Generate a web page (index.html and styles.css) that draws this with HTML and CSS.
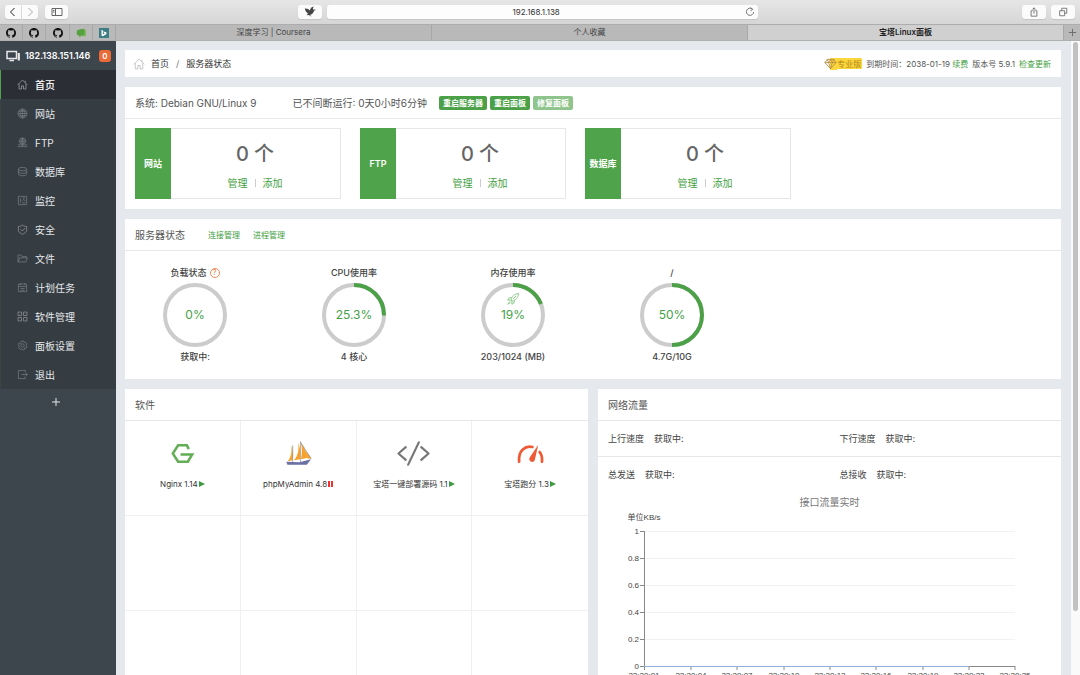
FILE: index.html
```html
<!DOCTYPE html>
<html lang="zh-CN">
<head>
<meta charset="utf-8">
<meta name="viewport" content="width=device-width, initial-scale=1">
<title>宝塔Linux面板</title>
<link rel="stylesheet" href="styles.css">
</head>
<body>
<svg class="defs" aria-hidden="true">
  <symbol id="github" viewBox="0 0 16 16"><path fill="currentColor" d="M8 0C3.58 0 0 3.58 0 8c0 3.54 2.29 6.53 5.47 7.59.4.07.55-.17.55-.38v-1.49c-2.01.37-2.53-.49-2.69-.94-.09-.23-.48-.94-.82-1.13-.28-.15-.68-.52-.01-.53.63-.01 1.08.58 1.23.82.72 1.21 1.87.87 2.33.66.07-.52.28-.87.51-1.07-1.78-.2-3.64-.89-3.64-3.95 0-.87.31-1.59.82-2.15-.08-.2-.36-1.02.08-2.12 0 0 .67-.21 2.2.82a7.6 7.6 0 0 1 4 0c1.53-1.04 2.2-.82 2.2-.82.44 1.1.16 1.92.08 2.12.51.56.82 1.27.82 2.15 0 3.07-1.87 3.75-3.65 3.95.29.25.54.73.54 1.48v2.15c0 .21.15.46.55.38A8 8 0 0 0 16 8c0-4.42-3.58-8-8-8z"/></symbol>
  <symbol id="home" viewBox="0 0 16 16"><path d="M1 8.5 8 1.500l7 7M3 7v7.500h3.500V10h3v4.500H13V7M12 5V2.500"/></symbol>
</svg>

<header class="toolbar">
  <div class="nav-buttons">
    <button class="tool-btn back" aria-label="后退"><svg viewBox="0 0 10 10"><path d="M6.500 1 2.500 5l4 4"/></svg></button>
    <button class="tool-btn forward" aria-label="前进"><svg viewBox="0 0 10 10"><path d="M3.500 1l4 4-4 4"/></svg></button>
  </div>
  <button class="tool-btn side-btn" aria-label="边栏"><svg viewBox="0 0 12 10"><path d="M1 1.500h10v7H1zM4.500 1.500v7M2 3.500h1.500M2 5h1.500"/></svg></button>
  <div class="address-group">
    <button class="tool-btn bird-btn" aria-label="扩展"><svg viewBox="0 0 12 12"><path class="solid" d="M.8 2.600C3 2.400 4.800 3.200 6 4.600 6.300 2.500 7.500 1 9.800.6 9 1.800 8.800 2.800 9 3.800c.9-.5 1.800-.4 2.700.1-1.200.2-1.700.8-2 1.700C9.200 7.600 7.800 8.700 6 8.700L7.500 10.800 4.800 9 2.600 9.200 4 7.600C2.400 6.600 1.200 4.900.8 2.600z"/></svg></button>
    <div class="address">
      <input class="address-input" type="text" value="192.168.1.138" aria-label="地址">
      <button class="reload" aria-label="重新载入"><svg viewBox="0 0 10 10"><path d="M7.500 2.200A3.600 3.600 0 1 0 8.600 5M5.500.6l2.200 1.700-2.200 1.500"/></svg></button>
    </div>
  </div>
  <div class="tool-right">
    <button class="tool-btn" aria-label="共享"><svg viewBox="0 0 10 12"><path d="M3.500 4.500h-2V11h7V4.500h-2M5 8V1M3 3l2-2 2 2"/></svg></button>
    <button class="tool-btn" aria-label="标签页概览"><svg viewBox="0 0 12 12"><path d="M2 4.500h6v6H2zM4.500 4.500v-3h6v6H8"/></svg></button>
  </div>
</header>

<nav class="tabs" aria-label="标签页">
  <div class="pins">
    <button class="pin" aria-label="GitHub"><svg><use href="#github"/></svg></button>
    <button class="pin" aria-label="GitHub"><svg><use href="#github"/></svg></button>
    <button class="pin" aria-label="GitHub"><svg><use href="#github"/></svg></button>
    <button class="pin" aria-label="收藏"><svg viewBox="0 0 12 12"><path fill="#79b85c" d="M4 3l8-1v8H4z"/><path fill="#55a13f" d="M1 3l4-1.500L10 1v7L6 9l-2 2.500V9L1 8.500z"/></svg></button>
    <button class="pin" aria-label="Bing"><svg viewBox="0 0 12 12"><path fill="#3d7d85" d="M0 0h12v12H0z"/><path fill="#fff" d="M3 2l1.700.6v5L7 6.500l-1.100-.6L5.200 4 9 5.300v2L4.700 10 3 9z"/></svg></button>
  </div>
  <a class="tab" href="#">深度学习 | Coursera</a>
  <a class="tab" href="#">个人收藏</a>
  <a class="tab tab-active" href="#" aria-current="page">宝塔Linux面板</a>
  <button class="tab-add" aria-label="新标签页"><svg viewBox="0 0 10 10"><path d="M5 1v8M1 5h8"/></svg></button>
</nav>

<div class="app">
  <aside class="sidebar">
    <div class="server">
      <svg class="server-icon" viewBox="0 0 15 12"><path d="M1 1.500h9.500v7H1zM3.500 10.500H8"/><path d="M12.800 3v7.500" stroke-width="2.200"/></svg>
      <span class="server-ip">182.138.151.146</span>
      <span class="badge">0</span>
    </div>
    <nav class="menu">
      <a class="menu-item menu-active" href="#"><svg><use href="#home"/></svg>首页</a>
      <a class="menu-item" href="#"><svg viewBox="0 0 16 16"><circle cx="8" cy="8" r="6.500"/><path d="M1.500 8h13M8 1.500v13M8 1.500c-4.500 3.500-4.500 9.500 0 13M8 1.500c4.500 3.500 4.500 9.500 0 13M2.500 4.700h11M2.500 11.300h11"/></svg>网站</a>
      <a class="menu-item" href="#"><svg viewBox="0 0 16 16"><circle cx="8" cy="6" r="4.700"/><path d="M3.300 6h9.400M8 1.300v9.400M8 1.300c-3 2.500-3 7 0 9.400M8 1.300c3 2.500 3 7 0 9.400M8 11v3M1 11.500h14M1 14h14"/></svg>FTP</a>
      <a class="menu-item" href="#"><svg viewBox="0 0 16 16"><ellipse cx="8" cy="4.500" rx="6" ry="2.500"/><path d="M2 4.500v7c0 3.500 12 3.500 12 0v-7M2 8c0 3.500 12 3.500 12 0"/></svg>数据库</a>
      <a class="menu-item" href="#"><svg viewBox="0 0 16 16"><path d="M2 2h12v12H2zM5 5v6M8 4.500h3.500M8 8l2-1.500L12 9M7.500 11.500H12"/></svg>监控</a>
      <a class="menu-item" href="#"><svg class="strong" viewBox="0 0 16 16"><path d="M2 3.500c3 0 4-.5 6-2 2 1.500 3 2 6 2V9c0 3-3 4.500-6 6-3-1.500-6-3-6-6zM5 7.500l2.500 2.500L12 6"/></svg>安全</a>
      <a class="menu-item" href="#"><svg viewBox="0 0 16 16"><path d="M1.500 13V3H6l1.500 2h6v2M1.500 13 4 7h11l-2 6z"/></svg>文件</a>
      <a class="menu-item" href="#"><svg viewBox="0 0 16 16"><path d="M2 3h12v11H2zM2 6.500h12M5 1.500V4M11 1.500V4M5 9.500h6M5 12h6"/></svg>计划任务</a>
      <a class="menu-item" href="#"><svg class="strong" viewBox="0 0 16 16"><path d="M1.500 1.500h5v5h-5zM9.500 1.500h5v5h-5zM1.500 9.500h5v5h-5zM9.500 9.500h5v5h-5z"/></svg>软件管理</a>
      <a class="menu-item" href="#"><svg viewBox="0 0 16 16"><circle cx="8" cy="8" r="2.500"/><path d="M6.500 1.500h3l.6 2 2-.5 2 2.500-1 1.800 1.400 1.600-1 2.500-2.200.2-.7 2.400-2.600.5L6.500 13l-2.300.5L2.400 11l1-2-1.900-1.600 1-2.600 2.300.2z"/></svg>面板设置</a>
      <a class="menu-item" href="#"><svg viewBox="0 0 16 16"><path d="M12 5V2H2v12h10v-3M6.500 8H15M12.500 5.500 15 8l-2.500 2.500"/></svg>退出</a>
    </nav>
    <button class="menu-add" aria-label="添加菜单"><svg viewBox="0 0 10 10"><path d="M5 1v8M1 5h8"/></svg></button>
  </aside>

  <main class="content">
    <section class="panel crumbs">
      <svg class="crumb-home"><use href="#home"/></svg>
      <a href="#">首页</a><span class="slash">/</span><span>服务器状态</span>
      <div class="license">
        <span class="pro"><svg viewBox="0 0 14 12"><path d="M3.500 1h7L13 4.500 7 11 1 4.500zM1 4.500h12M3.500 1 5 4.500 7 1l2 3.500L10.500 1M5 4.500 7 11l2-6.500"/></svg>专业版</span>
        <span>到期时间：2038-01-19 <a class="green" href="#">续费</a></span>
        <span>版本号 5.9.1</span>
        <a class="green" href="#">检查更新</a>
      </div>
    </section>

    <section class="panel">
      <div class="panel-head">
        <span class="os">系统: Debian GNU/Linux 9</span>
        <span class="uptime">已不间断运行: 0天0小时6分钟</span>
        <div class="actions">
          <button class="action">重启服务器</button>
          <button class="action">重启面板</button>
          <button class="action action-soft">修复面板</button>
        </div>
      </div>
      <div class="tiles">
        <article class="tile"><h3 class="tile-name">网站</h3><div class="tile-body"><p class="tile-count">0 个</p><p class="tile-links"><a href="#">管理</a><i></i><a href="#">添加</a></p></div></article>
        <article class="tile"><h3 class="tile-name">FTP</h3><div class="tile-body"><p class="tile-count">0 个</p><p class="tile-links"><a href="#">管理</a><i></i><a href="#">添加</a></p></div></article>
        <article class="tile"><h3 class="tile-name">数据库</h3><div class="tile-body"><p class="tile-count">0 个</p><p class="tile-links"><a href="#">管理</a><i></i><a href="#">添加</a></p></div></article>
      </div>
    </section>

    <section class="panel">
      <div class="panel-head">
        <h2>服务器状态</h2>
        <div class="head-links"><a class="green" href="#">连接管理</a><a class="green" href="#">进程管理</a></div>
      </div>
      <div class="gauges">
        <div class="gauge">
          <h3>负载状态<button class="help" aria-label="说明">?</button></h3>
          <div class="ring"><svg viewBox="0 0 64 64"><circle class="track" cx="32" cy="32" r="30"/></svg><span>0%</span></div>
          <p>获取中:</p>
        </div>
        <div class="gauge">
          <h3>CPU使用率</h3>
          <div class="ring"><svg viewBox="0 0 64 64"><circle class="track" cx="32" cy="32" r="30"/><circle class="value" cx="32" cy="32" r="30" pathLength="100" stroke-dasharray="25.3 100"/></svg><span>25.3%</span></div>
          <p>4 核心</p>
        </div>
        <div class="gauge">
          <h3>内存使用率</h3>
          <div class="ring"><svg viewBox="0 0 64 64"><circle class="track" cx="32" cy="32" r="30"/><circle class="value" cx="32" cy="32" r="30" pathLength="100" stroke-dasharray="19 100"/></svg>
            <svg class="rocket" viewBox="0 0 12 12"><path d="M4 7C4.500 3.500 7.500 1 11.500.5 11.300 4.500 8.500 7.500 5 8zM4.500 4.500 2 5 .8 7.200 4 7M7.500 7.500 7 10l-2.200 1.200L5 8M2.800 8.500.8 11.200 3.500 9.500M6 6l3-3"/></svg>
            <span>19%</span></div>
          <p>203/1024 (MB)</p>
        </div>
        <div class="gauge">
          <h3>/</h3>
          <div class="ring"><svg viewBox="0 0 64 64"><circle class="track" cx="32" cy="32" r="30"/><circle class="value" cx="32" cy="32" r="30" pathLength="100" stroke-dasharray="50 100"/></svg><span>50%</span></div>
          <p>4.7G/10G</p>
        </div>
      </div>
    </section>

    <div class="columns">
      <section class="panel">
        <div class="panel-head"><h2>软件</h2></div>
        <div class="apps">
          <a class="app-cell" href="#">
            <svg class="app-icon" viewBox="0 0 32 32"><path fill="none" stroke="#62ad55" stroke-width="2.600" d="M22.500 11.500 20.500 7.500h-9L6 16l5.500 8.500h10L26 17H14"/></svg>
            <span class="app-name">Nginx 1.14<i class="play"></i></span>
          </a>
          <a class="app-cell" href="#">
            <svg class="app-icon" viewBox="0 0 32 32"><path fill="#f6a22c" d="M8.500 8c.8 5 .3 11-3.500 16l5-1c1-6 .5-11-1.500-15zM15.500 5c1.500 7-.5 14-4 18l6-1c1-7 .5-12-2-17zM18 4c2 6 1.800 12 .5 18l7-1.500C24.500 14 21.500 9 18 4zM24 14l5.500 7-4 .5z"/><path fill="none" stroke="#999" stroke-width=".8" d="M10 7.500V25M18 3.500V25M18 4l11 17.500"/><path fill="#6b70a5" d="M3.500 24.500 17 25l12-3-4.500 5.500H4.500z"/></svg>
            <span class="app-name">phpMyAdmin 4.8<i class="pause"></i></span>
          </a>
          <a class="app-cell" href="#">
            <svg class="app-icon wide" viewBox="0 0 36 32"><path fill="none" stroke="#777" stroke-width="2.300" stroke-linecap="round" stroke-linejoin="round" d="M10 9.500 2.500 16l7.500 6.500M26 9.500l7.500 6.500-7.500 6.500M23.500 4.500l-11 23"/></svg>
            <span class="app-name">宝塔一键部署源码 1.1<i class="play"></i></span>
          </a>
          <a class="app-cell" href="#">
            <svg class="app-icon" viewBox="0 0 32 32"><path fill="none" stroke="#ef5a36" stroke-width="2.800" stroke-linecap="round" d="M4.300 24.500C3 13 11 7.500 18 9.300M25.500 14.500c2 2.500 2.800 6 2.300 10"/><path fill="#ef5a36" d="M24 7 20.500 22.500c-1.200 4-7 2.200-5.500-2z"/></svg>
            <span class="app-name">宝塔跑分 1.3<i class="play"></i></span>
          </a>
          <div class="app-cell"></div><div class="app-cell"></div><div class="app-cell"></div><div class="app-cell"></div>
          <div class="app-cell"></div><div class="app-cell"></div><div class="app-cell"></div><div class="app-cell"></div>
        </div>
      </section>

      <section class="panel">
        <div class="panel-head"><h2>网络流量</h2></div>
        <dl class="traffic">
          <div><dt>上行速度</dt><dd>获取中:</dd></div><div><dt>下行速度</dt><dd>获取中:</dd></div>
        </dl>
        <dl class="traffic traffic-last">
          <div><dt>总发送</dt><dd>获取中:</dd></div><div><dt>总接收</dt><dd>获取中:</dd></div>
        </dl>
        <h3 class="chart-title">接口流量实时</h3>
        <svg class="chart" viewBox="0 0 463 176" role="img" aria-label="接口流量实时">
          <text class="mid" x="46" y="9">单位KB/s</text>
          <path class="grid" d="M47 20.500h370M47 47.500h370M47 74.500h370M47 101.500h370M47 128.500h370"/>
          <path class="axis" d="M46.500 20v136M42 20.500h5M42 47.500h5M42 74.500h5M42 101.500h5M42 128.500h5M42 155.500h375M93 155v4M139 155v4M186 155v4M232 155v4M278 155v4M325 155v4M371 155v4M417 155v4M46.500 155v4"/>
          <path class="series" d="M46 155.500h325"/>
          <g class="end"><text x="41" y="23">1</text><text x="41" y="50">0.8</text><text x="41" y="77">0.6</text><text x="41" y="104">0.4</text><text x="41" y="131">0.2</text><text x="41" y="158">0</text></g>
          <g class="mid"><text x="46" y="167">22:20:01</text><text x="93" y="167">22:20:04</text><text x="139" y="167">22:20:07</text><text x="186" y="167">22:20:10</text><text x="232" y="167">22:20:13</text><text x="278" y="167">22:20:16</text><text x="325" y="167">22:20:19</text><text x="371" y="167">22:20:22</text><text x="417" y="167">22:20:25</text></g>
        </svg>
      </section>
    </div>
  </main>
  <div class="scroll" aria-hidden="true"><div class="scroll-thumb"></div></div>
</div>
</body>
</html>
```
FILE: styles.css
```css
* { box-sizing: border-box; }
html { height: 100%; }
body {
  margin: 0; height: 100%; overflow: hidden;
  display: flex; flex-direction: column;
  font: 9px/14px Inter, "Noto Sans CJK SC", sans-serif;
  color: #444; background: #e5e8ed;
}
h2, h3, p, dl, dd { margin: 0; font-weight: 400; font-size: inherit; }
a { color: inherit; text-decoration: none; }
button { font: inherit; color: inherit; border: 0; padding: 0; background: none; }
svg { display: block; fill: none; stroke: currentColor; flex: none; }
.defs { position: absolute; width: 0; height: 0; }
.green { color: #3fa03f; }

/* Browser toolbar */
.toolbar {
  flex: none; height: 24px; padding: 0 5px; background: linear-gradient(#e6e6e6, #d6d6d6);
  display: flex; align-items: center; gap: 7px;
}
.nav-buttons { display: flex; gap: 1px; }
.tool-btn {
  height: 14px; width: 24px; border-radius: 3px; background: #fbfbfb; color: #666;
  display: flex; align-items: center; justify-content: center; box-shadow: 0 1px 1px #c4c4c4;
}
.tool-btn svg { width: 10px; height: 10px; }
.back, .forward { width: 16px; }
.back { color: #222; border-radius: 3px 0 0 3px; }
.forward { color: #aaa; border-radius: 0 3px 3px 0; }
.side-btn { width: 23px; }
.side-btn svg { width: 12px; }
.address-group { display: flex; gap: 5px; width: 43%; margin: 0 24% 0 auto; }
.bird-btn { color: #444; }
.bird-btn svg { width: 12px; height: 12px; }
.solid { fill: currentColor; stroke: none; }
.address { flex: 1; display: flex; align-items: center; height: 14px; padding-right: 3px; border-radius: 3px; background: #fdfdfd; box-shadow: 0 1px 1px #c4c4c4; }
.address-input { flex: 1; min-width: 0; border: 0; padding: 0; background: none; text-align: center; font: 8px/14px Inter, sans-serif; color: #333; outline: 0; }
.reload { color: #777; }
.reload svg { width: 10px; height: 10px; }
.tool-right { display: flex; gap: 5px; }

/* Browser tabs */
.tabs { flex: none; height: 17px; display: flex; background: #b9b9b9; border-top: 1px solid #adadad; border-bottom: 1px solid #b0b0b0; font-size: 8px; }
.pins { display: flex; width: 116px; }
.pin { flex: 1; display: flex; align-items: center; justify-content: center; border-right: 1px solid #a8a8a8; color: #111; }
.pin svg { width: 10px; height: 10px; stroke: none; }
.tab { flex: 1; text-align: center; line-height: 15px; border-right: 1px solid #a8a8a8; color: #444; }
.tab-active { background: #d0d0d0; color: #222; font-weight: 600; }
.tab-add { width: 16px; display: flex; align-items: center; justify-content: center; color: #666; }
.tab-add svg { width: 9px; height: 9px; }

/* Sidebar */
.app { flex: 1; min-height: 0; display: flex; }
.sidebar { flex: none; width: 116px; background: #3d454d; color: #e6e8ea; }
.server { height: 29px; padding: 0 5px 0 6px; display: flex; align-items: center; gap: 4px; }
.server-icon { width: 15px; height: 12px; stroke-width: 1.500; }
.server-ip { flex: 1; font-size: 9px; font-weight: 600; color: #fff; white-space: nowrap; }
.badge { width: 12px; height: 12px; border-radius: 3px; background: #ec6a36; color: #fff; font-weight: 600; font-size: 8px; line-height: 12px; text-align: center; }
.menu { background: #353d43; }
.menu-item { display: flex; align-items: center; gap: 7px; height: 29px; padding-left: 16px; border-left: 1px solid #3a4440; font-size: 10px; }
.menu-item svg { width: 11px; height: 11px; color: #7b8187; }
.menu-item .strong { color: #969ba0; }
.menu-active { background: #2c2e36; border-left-color: #4fa34b; color: #fff; font-weight: 500; }
.menu-active svg { color: #aaadb2; }
.menu-add { width: 100%; height: 26px; display: flex; align-items: center; justify-content: center; }
.menu-add svg { width: 10px; height: 10px; margin-right: 4px; }

/* Panels */
.content { flex: 1; min-width: 0; padding: 9px 10px 0 9px; display: flex; flex-direction: column; gap: 10px; }
.panel { flex: none; background: #fff; }
.panel-head { height: 32px; padding: 0 10px; display: flex; align-items: center; border-bottom: 1px solid #e6e8eb; font-size: 10px; color: #555; }
.crumbs { height: 27px; padding: 0 10px 0 8px; display: flex; align-items: center; color: #333; }
.crumb-home { width: 12px; height: 12px; color: #b5b5b5; margin-right: 6px; }
.slash { padding: 0 7px; color: #777; }
.license { margin-left: auto; display: flex; align-items: center; gap: 4px; font-size: 8px; color: #555; }
.pro { display: flex; align-items: center; height: 11px; padding-right: 1px; background: #fbd73c; color: #b5861c; border-radius: 1px; }
.pro svg { width: 13px; height: 12px; color: #b8914a; background: linear-gradient(90deg, #fff 50%, #fbd73c 50%); }
.os { margin-right: 36px; }
.actions { display: flex; gap: 3px; margin-left: 12px; }
.action { height: 14px; padding: 0 4px; border-radius: 2px; background: #4ca148; color: #fff; font-size: 8px; font-weight: 600; }
.action-soft { background: #8fc58d; }

.tiles { display: grid; grid-template-columns: repeat(3, minmax(0, 206px)); gap: 19px; padding: 9px 10px 10px; }
.tile { display: flex; height: 71px; border: 1px solid #e4e6e8; border-left: 0; }
.tile-name { width: 36px; margin: -1px 0; background: #4fa34a; color: #fff; font-weight: 600; display: flex; align-items: center; justify-content: center; }
.tile-body { flex: 1; text-align: center; padding: 11px 1px 0 0; }
.tile-count { font-size: 20px; line-height: 28px; font-weight: 500; color: #666; }
.tile-links { display: flex; justify-content: center; align-items: center; gap: 7px; margin-top: 8px; font-size: 10px; color: #3fa03f; }
.tile-links i { width: 1px; height: 8px; background: #ccc; }

.head-links { display: flex; gap: 13px; margin-left: 23px; font-size: 8px; }
.gauges { display: grid; grid-template-columns: repeat(4, 140px); gap: 19px; height: 128px; padding-top: 15px; color: #444; }
.gauge { display: flex; flex-direction: column; align-items: center; }
.gauge h3 { display: flex; align-items: center; gap: 3px; height: 14px; margin-bottom: 3px; font-weight: 500; }
.gauge p { margin-top: 3px; font-weight: 500; }
.help { width: 10px; height: 10px; border: 1px solid #ef8a5a; border-radius: 50%; color: #ef8a5a; font-size: 7px; line-height: 8px; }
.ring { position: relative; width: 64px; height: 64px; display: grid; place-items: center; }
.ring > * { grid-area: 1 / 1; }
.ring span { font-size: 12px; color: #46a046; }
.track { stroke: #ccc; stroke-width: 4; }
.value { stroke: #4ca148; stroke-width: 4; transform: rotate(-90deg); transform-origin: center; }
.rocket { width: 12px; height: 12px; margin-bottom: 32px; color: #8cc98a; }

.columns { display: grid; grid-template-columns: 1fr 1fr; gap: 10px; }
.apps { display: grid; grid-template-columns: repeat(4, 1fr); grid-auto-rows: 95px; }
.app-cell { display: flex; flex-direction: column; align-items: center; padding-top: 17px; border-right: 1px solid #eef0f4; border-bottom: 1px solid #eef0f4; }
.app-cell:nth-child(4n) { border-right: 0; }
.app-icon { width: 31px; height: 31px; stroke: none; }
.wide { width: 35px; }
.app-name { display: flex; align-items: center; gap: 1px; margin-top: 8px; font-size: 8px; color: #333; white-space: nowrap; }
.play { flex: none; width: 0; height: 0; border: 3px solid transparent; border-left: 6px solid #3f9b3f; border-right: 0; }
.pause { flex: none; width: 5px; height: 6px; border: solid #e33; border-width: 0 2px; }

.traffic { display: grid; grid-template-columns: 1fr 1fr; height: 36px; align-items: center; border-bottom: 1px solid #e6e8eb; }
.traffic div { display: flex; gap: 10px; padding-left: 10px; }
.traffic-last { border-bottom: 0; }
.chart-title { text-align: center; font-size: 10px; line-height: 18px; color: #777; }
.chart { width: 100%; stroke: none; font: 8px "Liberation Sans", "Noto Sans CJK SC", sans-serif; }
.chart text { fill: #444; }
.mid { text-anchor: middle; }
.end { text-anchor: end; }
.grid { stroke: #f2f2f2; }
.axis { stroke: #888; }
.series { stroke: #8fb0d6; stroke-width: 1; }

.scroll { flex: none; width: 9px; padding: 1px 2px; background: #fafafa; }
.scroll-thumb { width: 5px; height: 90%; border-radius: 3px; background: #c1c1c1; }
```
